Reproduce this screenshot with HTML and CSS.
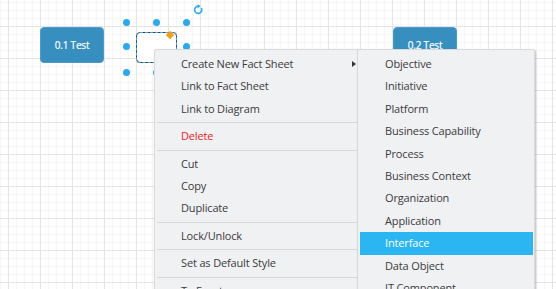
FILE: index.html
```html
<!DOCTYPE html>
<html>
<head>
    <title>Diagram Editor</title>
    <link rel="stylesheet" href="styles.css">
</head>
<body>
    <div class="canvas">
        <div class="node node-first">0.1 Test</div>
        <div class="node node-second">0.2 Test</div>

        <div class="shape-selected">
            <span class="shape-anchor"></span>
        </div>
        <span class="handle" style="left: 126px; top: 22px;"></span>
        <span class="handle" style="left: 156px; top: 22px;"></span>
        <span class="handle" style="left: 186px; top: 22px;"></span>
        <span class="handle" style="left: 126px; top: 46px;"></span>
        <span class="handle" style="left: 186px; top: 46px;"></span>
        <span class="handle" style="left: 126px; top: 72px;"></span>
        <span class="handle" style="left: 156px; top: 72px;"></span>
        <span class="handle" style="left: 186px; top: 72px;"></span>
        <svg class="rotate-handle" width="11" height="11" viewBox="0 0 11 11">
            <path d="M8.3 4 A3.6 3.6 0 1 1 5.3 2.2" fill="none" stroke="#29aaf0" stroke-width="1.6"/>
            <path d="M4.6 0.2 L7.6 2.2 L4.6 4.2 Z" fill="#29aaf0"/>
        </svg>

        <div class="context-menu">
            <div class="menu-item has-sub">Create New Fact Sheet<span class="sub-arrow"></span></div>
            <div class="menu-item">Link to Fact Sheet</div>
            <div class="menu-item">Link to Diagram</div>
            <div class="menu-sep"></div>
            <div class="menu-item danger">Delete</div>
            <div class="menu-sep"></div>
            <div class="menu-item">Cut</div>
            <div class="menu-item">Copy</div>
            <div class="menu-item">Duplicate</div>
            <div class="menu-sep"></div>
            <div class="menu-item">Lock/Unlock</div>
            <div class="menu-sep"></div>
            <div class="menu-item">Set as Default Style</div>
            <div class="menu-sep"></div>
            <div class="menu-item">To Front</div>
        </div>

        <div class="context-menu submenu">
            <div class="menu-item">Objective</div>
            <div class="menu-item">Initiative</div>
            <div class="menu-item">Platform</div>
            <div class="menu-item">Business Capability</div>
            <div class="menu-item">Process</div>
            <div class="menu-item">Business Context</div>
            <div class="menu-item">Organization</div>
            <div class="menu-item">Application</div>
            <div class="menu-item active">Interface</div>
            <div class="menu-item">Data Object</div>
            <div class="menu-item">IT Component</div>
        </div>
    </div>
</body>
</html>
```

FILE: styles.css
```css
body {
    margin: 0;
    padding: 0;
    font-family: 'Open Sans', 'Noto Sans', sans-serif;
    overflow: hidden;
}

.canvas {
    position: relative;
    width: 556px;
    height: 289px;
    overflow: hidden;
    background-color: #fff;
    background-image:
        linear-gradient(to right, #e4e4e4 1px, transparent 1px),
        linear-gradient(to bottom, #e4e4e4 1px, transparent 1px),
        linear-gradient(to right, #f6f6f6 1px, transparent 1px),
        linear-gradient(to bottom, #f6f6f6 1px, transparent 1px);
    background-size: 32px 32px, 32px 32px, 8px 8px, 8px 8px;
    background-position: 8px 0, 0 26px, 0 0, 0 2px;
}

.node {
    position: absolute;
    top: 27px;
    width: 64px;
    height: 36px;
    box-sizing: border-box;
    background-color: #378fc0;
    border: 1px solid #4a9bc9;
    border-radius: 4px;
    color: #fff;
    font-size: 10px;
    letter-spacing: -0.2px;
    -webkit-text-stroke: 0.2px #fff;
    display: flex;
    justify-content: center;
    align-items: center;
}

.node-first {
    left: 40px;
}

.node-second {
    left: 393px;
}

.shape-selected {
    position: absolute;
    left: 136px;
    top: 32px;
    width: 41px;
    height: 31px;
    box-sizing: border-box;
    background-color: #fff;
    border: 1px solid #3c3c3c;
    border-radius: 4px;
    outline: 1px dashed #4aa8e0;
    outline-offset: -1px;
}

.shape-anchor {
    position: absolute;
    right: 3px;
    top: -1px;
    width: 6px;
    height: 6px;
    background-color: #f6a01a;
    transform: rotate(45deg);
}

.handle {
    position: absolute;
    width: 7px;
    height: 7px;
    margin: -3.5px 0 0 -3.5px;
    border-radius: 50%;
    background-color: #29aaf0;
}

.rotate-handle {
    position: absolute;
    left: 193px;
    top: 4px;
}

.context-menu {
    position: absolute;
    left: 154px;
    top: 49px;
    width: 206px;
    padding-top: 3px;
    background-color: #f0f1f3;
    border: 1px solid #d9dadc;
    border-radius: 2px;
    box-shadow: 1px 1px 3px rgba(0, 0, 0, 0.15);
    font-size: 11px;
    letter-spacing: -0.15px;
    color: #3b3b3b;
}

.submenu {
    left: 357px;
    width: 174px;
    padding-left: 1px;
    padding-right: 1px;
    box-shadow: 1px 1px 2px rgba(0, 0, 0, 0.25);
}

.menu-item {
    height: 22.4px;
    line-height: 22.4px;
    padding-left: 26px;
    white-space: nowrap;
    display: flex;
    align-items: center;
}

.submenu .menu-item {
    padding-left: 25px;
    margin-left: 1px;
}

.menu-item.danger {
    color: #f21b1b;
}

.menu-item.active {
    background-color: #2bb5f2;
    color: #fff;
}

.sub-arrow {
    margin-left: auto;
    margin-right: 5px;
    width: 0;
    height: 0;
    border-top: 3.5px solid transparent;
    border-bottom: 3.5px solid transparent;
    border-left: 4px solid #333;
}

.menu-sep {
    height: 1px;
    margin: 2px 0 2px 2px;
    background-color: #d6d7d9;
}
```
